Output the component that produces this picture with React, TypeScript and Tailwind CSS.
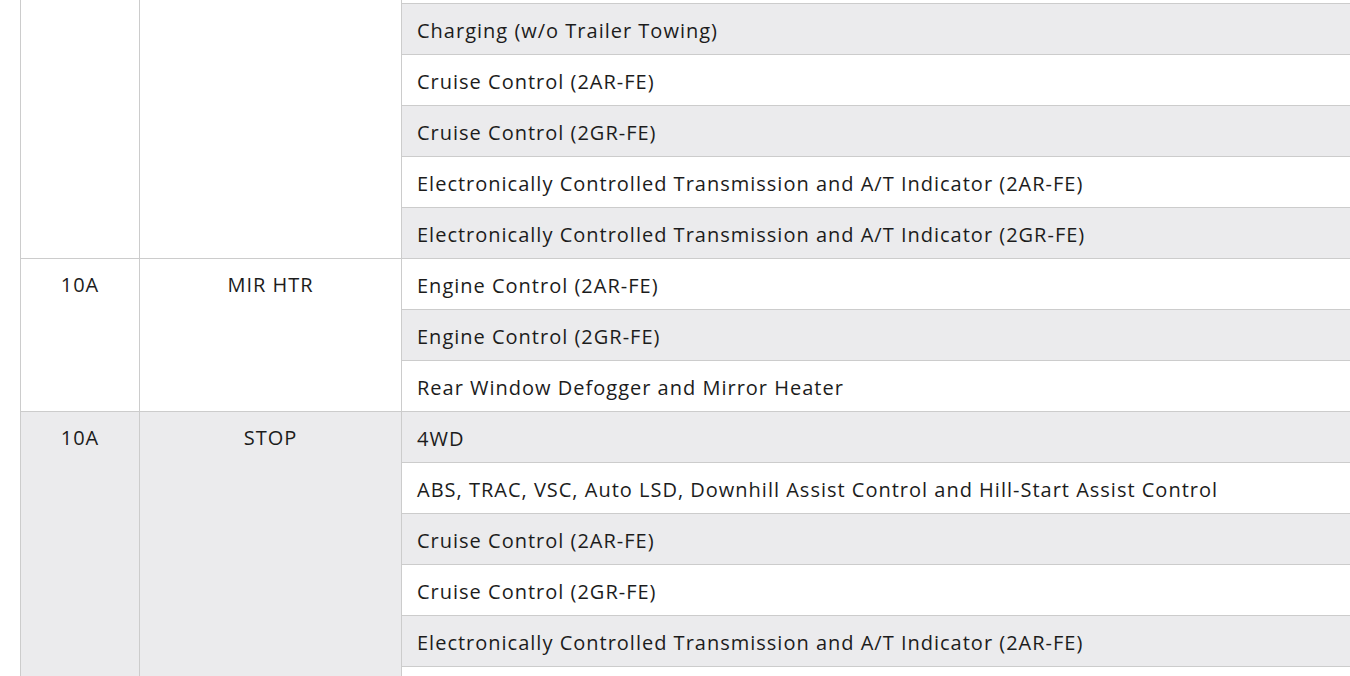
import React from 'react';

type Group = {
    amp: string;
    name: string;
    shaded: boolean;
    circuits: { label: string; shaded: boolean }[];
};

// first group starts above the visible area; its opening row is scrolled off,
// and the last row only shows its top border
const groups: Group[] = [
    {
        amp: '',
        name: '',
        shaded: false,
        circuits: [
            { label: '', shaded: false },
            { label: 'Charging (w/o Trailer Towing)', shaded: true },
            { label: 'Cruise Control (2AR-FE)', shaded: false },
            { label: 'Cruise Control (2GR-FE)', shaded: true },
            { label: 'Electronically Controlled Transmission and A/T Indicator (2AR-FE)', shaded: false },
            { label: 'Electronically Controlled Transmission and A/T Indicator (2GR-FE)', shaded: true },
        ],
    },
    {
        amp: '10A',
        name: 'MIR HTR',
        shaded: false,
        circuits: [
            { label: 'Engine Control (2AR-FE)', shaded: false },
            { label: 'Engine Control (2GR-FE)', shaded: true },
            { label: 'Rear Window Defogger and Mirror Heater', shaded: false },
        ],
    },
    {
        amp: '10A',
        name: 'STOP',
        shaded: true,
        circuits: [
            { label: '4WD', shaded: true },
            { label: 'ABS, TRAC, VSC, Auto LSD, Downhill Assist Control and Hill-Start Assist Control', shaded: false },
            { label: 'Cruise Control (2AR-FE)', shaded: true },
            { label: 'Cruise Control (2GR-FE)', shaded: false },
            { label: 'Electronically Controlled Transmission and A/T Indicator (2AR-FE)', shaded: true },
            { label: '', shaded: false },
        ],
    },
];

const cell = 'border border-[#cccccc] h-[51px] px-[15px] text-[20px] leading-[24px] tracking-[1px]';

export default function App() {
    return (
        <div className="w-[1350px] h-[676px] overflow-hidden bg-white text-[#1c1c1c] font-['Open_Sans',sans-serif]">
            <div className="pl-5 -mt-[48px]">
                <table className="w-[1345px] border-collapse">
                    <colgroup>
                        <col className="w-[119px]" />
                        <col className="w-[262px]" />
                        <col />
                    </colgroup>
                    {groups.map((g, gi) => (
                        <tbody key={gi}>
                            {g.circuits.map((c, i) => (
                                <tr key={i}>
                                    {i === 0 && (
                                        <>
                                            <td
                                                rowSpan={g.circuits.length}
                                                className={`${cell} align-top text-center pt-[14px] ${g.shaded ? 'bg-[#ebebed]' : 'bg-white'}`}
                                            >
                                                {g.amp}
                                            </td>
                                            <td
                                                rowSpan={g.circuits.length}
                                                className={`${cell} align-top text-center pt-[14px] ${g.shaded ? 'bg-[#ebebed]' : 'bg-white'}`}
                                            >
                                                {g.name}
                                            </td>
                                        </>
                                    )}
                                    <td className={`${cell} align-middle text-left pt-[3px] pb-0 ${c.shaded ? 'bg-[#ebebed]' : 'bg-white'}`}>
                                        {c.label}
                                    </td>
                                </tr>
                            ))}
                        </tbody>
                    ))}
                </table>
            </div>
        </div>
    );
}
